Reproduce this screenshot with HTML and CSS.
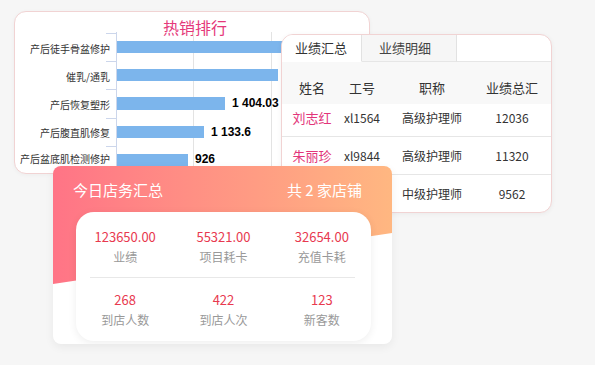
FILE: index.html
```html
<!DOCTYPE html>
<html lang="en">
<head>
    <meta charset="UTF-8">
    <meta name="viewport" content="width=device-width, initial-scale=1.0">
    <title>店务汇总</title>
    <link rel="stylesheet" href="styles.css">
</head>
<body>
    <div class="stage">
        <div class="card chart-card">
            <svg class="chart" width="356" height="163" viewBox="0 0 356 163">
                <text class="chart-title" x="181" y="16">热销排行</text>
                <g class="grid">
                    <line x1="179.5" y1="21" x2="179.5" y2="163"></line>
                    <line x1="257.5" y1="21" x2="257.5" y2="163"></line>
                </g>
                <g class="axis">
                    <line x1="102.5" y1="21" x2="102.5" y2="163"></line>
                    <line x1="92" y1="22.5" x2="102" y2="22.5"></line>
                    <line x1="92" y1="50.5" x2="102" y2="50.5"></line>
                    <line x1="92" y1="78.5" x2="102" y2="78.5"></line>
                    <line x1="92" y1="107.5" x2="102" y2="107.5"></line>
                    <line x1="92" y1="135.5" x2="102" y2="135.5"></line>
                </g>
                <g class="bars">
                    <rect x="103" y="30" width="180" height="12"></rect>
                    <rect x="103" y="58" width="161" height="12"></rect>
                    <rect x="103" y="86" width="108" height="13"></rect>
                    <rect x="103" y="115" width="87" height="12"></rect>
                    <rect x="103" y="143" width="71" height="12"></rect>
                </g>
                <g class="cats">
                    <text x="96" y="37">产后徒手骨盆修护</text>
                    <text x="96" y="65">催乳/通乳</text>
                    <text x="96" y="93">产后恢复塑形</text>
                    <text x="96" y="121">产后腹直肌修复</text>
                    <text x="96" y="147">产后盆底肌检测修护</text>
                </g>
                <g class="vals">
                    <text x="218" y="92">1 404.03</text>
                    <text x="197" y="121">1 133.6</text>
                    <text x="181" y="148">926</text>
                </g>
            </svg>
        </div>

        <div class="card table-card">
            <div class="tabs">
                <div class="tab active">业绩汇总</div>
                <div class="tab">业绩明细</div>
                <div class="tab-rest"></div>
            </div>
            <div class="row head">
                <span class="c1">姓名</span>
                <span class="c2">工号</span>
                <span class="c3">职称</span>
                <span class="c4">业绩总汇</span>
            </div>
            <div class="row first">
                <span class="c1 name">刘志红</span>
                <span class="c2">xl1564</span>
                <span class="c3">高级护理师</span>
                <span class="c4">12036</span>
            </div>
            <div class="row">
                <span class="c1 name">朱丽珍</span>
                <span class="c2">xl9844</span>
                <span class="c3">高级护理师</span>
                <span class="c4">11320</span>
            </div>
            <div class="row last">
                <span class="c1 name"></span>
                <span class="c2"></span>
                <span class="c3">中级护理师</span>
                <span class="c4">9562</span>
            </div>
        </div>

        <div class="card summary-card">
            <div class="summary-head">
                <span>今日店务汇总</span>
                <span>共 2 家店铺</span>
            </div>
            <div class="summary-body">
                <div class="stats">
                    <div class="stat"><b>123650.00</b><span>业绩</span></div>
                    <div class="stat"><b>55321.00</b><span>项目耗卡</span></div>
                    <div class="stat"><b>32654.00</b><span>充值卡耗</span></div>
                </div>
                <div class="divider"></div>
                <div class="stats second">
                    <div class="stat"><b>268</b><span>到店人数</span></div>
                    <div class="stat"><b>422</b><span>到店人次</span></div>
                    <div class="stat"><b>123</b><span>新客数</span></div>
                </div>
            </div>
        </div>
    </div>
</body>
</html>
```

FILE: styles.css
```css
body {
    margin: 0;
    background: #f6f6f6;
    font-family: "Noto Sans CJK SC", "Noto Sans", sans-serif;
    color: #333;
}
.stage {
    position: relative;
    width: 595px;
    height: 365px;
    overflow: hidden;
}
.card {
    position: absolute;
    box-sizing: border-box;
    background: #fff;
    overflow: hidden;
}

/* 热销排行 */
.chart-card {
    left: 14px;
    top: 11px;
    width: 356px;
    height: 163px;
    border: 1px solid #f1d3d3;
    border-radius: 12px;
    box-shadow: 0 1px 4px rgba(0, 0, 0, 0.04);
}
.chart {
    display: block;
    margin: -1px;
}
.chart-title {
    font-size: 16px;
    fill: #e5387a;
    text-anchor: middle;
    dominant-baseline: central;
}
.grid line {
    stroke: #e3e3e3;
    stroke-width: 1;
}
.axis line {
    stroke: #ccd6eb;
    stroke-width: 1;
}
.bars rect {
    fill: #7cb5ec;
}
.cats text {
    font-size: 10px;
    fill: #333;
    text-anchor: end;
    dominant-baseline: central;
}
.vals text {
    font-family: "Liberation Sans", Arial, sans-serif;
    font-size: 12px;
    font-weight: bold;
    fill: #000;
    dominant-baseline: central;
}

/* 业绩表 */
.table-card {
    left: 281px;
    top: 34px;
    width: 271px;
    height: 179px;
    border: 1px solid #f1d3d3;
    border-radius: 12px;
    box-shadow: 0 1px 5px rgba(0, 0, 0, 0.05);
}
.tabs {
    display: flex;
    height: 27px;
    font-size: 13px;
}
.tab {
    box-sizing: border-box;
    line-height: 26px;
    border-bottom: 1px solid #e6e6e6;
    border-right: 1px solid #e2e2e2;
    color: #444;
    background: #f6f6f6;
}
.tab.active {
    width: 80px;
    padding-left: 13px;
    background: #fff;
    border-bottom-color: #fff;
    color: #333;
}
.tab:nth-child(2) {
    width: 95px;
    padding-left: 17px;
}
.tab-rest {
    flex: 1;
    border-bottom: 1px solid #e6e6e6;
}
.row {
    display: flex;
    box-sizing: border-box;
    height: 38px;
    padding-left: 5px;
    align-items: center;
    font-size: 12px;
    line-height: 20px;
    border-bottom: 1px solid #e6e6e6;
}
.row span {
    text-align: center;
    white-space: nowrap;
}
.row.head {
    height: 42px;
    align-items: flex-end;
    padding-bottom: 6px;
    background: #f8f8f8;
    font-size: 13px;
    border-bottom: 0;
}
.row.first {
    height: 33px;
    align-items: flex-start;
    padding-top: 4px;
}
.row.last {
    border-bottom: 0;
}
.c1 { width: 50px; }
.c2 { width: 50px; }
.c3 { width: 90px; }
.c4 { width: 70px; }
.name {
    color: #e2357a;
    font-size: 13px;
}

/* 今日店务汇总 */
.summary-card {
    left: 53px;
    top: 166px;
    width: 339px;
    height: 178px;
    border-radius: 8px;
    box-shadow: 0 3px 10px rgba(0, 0, 0, 0.06);
}
.summary-card::before {
    content: "";
    position: absolute;
    left: 0;
    top: 0;
    width: 100%;
    height: 118px;
    background: linear-gradient(90deg, #ff7486, #ffb781);
    clip-path: polygon(0 0, 100% 0, 100% 67px, 0 118px);
}
.summary-head {
    position: relative;
    display: flex;
    justify-content: space-between;
    padding: 14px 30px 12px 20px;
    font-size: 15px;
    line-height: 20px;
    color: #fff;
}
.summary-body {
    position: relative;
    margin: 0 21px 0 23px;
    height: 129px;
    background: #fff;
    border-radius: 18px;
    box-shadow: 0 2px 8px rgba(0, 0, 0, 0.07);
}
.stats {
    display: flex;
    padding-top: 15px;
}
.stats.second {
    padding-top: 12px;
}
.stat {
    flex: 1;
    display: flex;
    flex-direction: column;
    align-items: center;
    line-height: 20px;
}
.stat b {
    font-weight: normal;
    font-size: 13px;
    color: #e8394f;
}
.stat span {
    font-size: 12px;
    color: #999;
}
.divider {
    height: 1px;
    margin: 10px 16px 0 14px;
    background: #e8e8e8;
}
```
